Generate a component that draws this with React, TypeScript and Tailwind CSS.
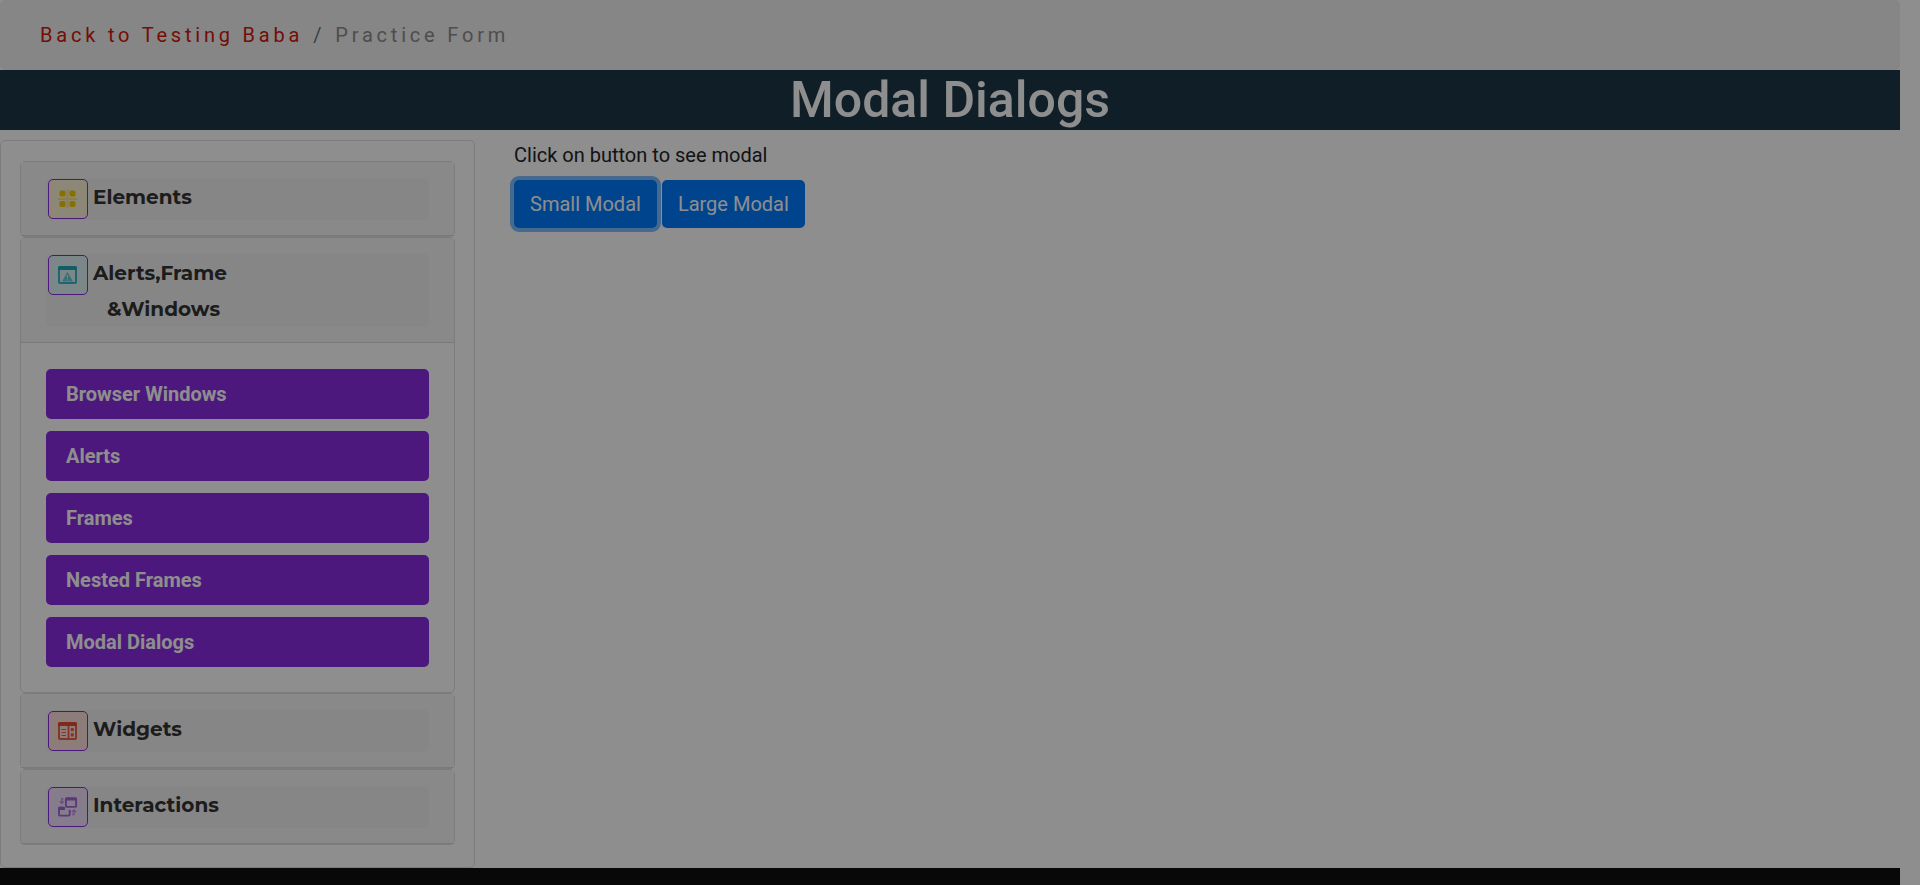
import type { ReactNode } from "react";

function ElementsIcon() {
  return (
    <svg viewBox="0 0 20 20" className="size-5" aria-hidden="true">
      <g fill="#f6d21f" opacity="0.45">
        <rect x="8.5" y="0.5" width="2" height="19" />
        <rect x="0" y="9" width="19" height="2" />
      </g>
      <g fill="#f5c900">
        <rect x="1.500" y="1.500" width="6" height="6" rx="1.800" />
        <rect x="11.500" y="1.500" width="6" height="6" rx="1.800" />
        <rect x="1.500" y="12" width="6" height="6" rx="1.800" />
        <rect x="11.500" y="12" width="6" height="6" rx="1.800" />
      </g>
    </svg>
  );
}

function AlertsIcon() {
  return (
    <svg viewBox="0 0 20 20" className="size-5" aria-hidden="true">
      <rect x="1" y="2" width="17" height="16" rx="1.600" fill="none" stroke="#38b6c8" strokeWidth="2" />
      <path d="M1.500 1h16A1.500 1.500 0 0 1 19 2.500V5H0V2.500A1.500 1.500 0 0 1 1.500 1z" fill="#1fa9bd" />
      <path d="M9.500 6.800L15 16.500H4z" fill="#6cc9d6" />
      <path d="M9.500 10v3M9.500 14.200v1.300" stroke="#d7f0f4" strokeWidth="1.200" />
    </svg>
  );
}

function WidgetsIcon() {
  return (
    <svg viewBox="0 0 20 20" className="size-5" aria-hidden="true">
      <rect x="1" y="2" width="17" height="16" rx="1.600" fill="none" stroke="#ee5f45" strokeWidth="2" />
      <path d="M1.500 1h16A1.500 1.500 0 0 1 19 2.500V5H0V2.500A1.500 1.500 0 0 1 1.500 1z" fill="#e84a30" />
      <path d="M10.500 5v13" stroke="#ee5f45" strokeWidth="1.800" />
      <path d="M3.500 8.500H8M3.500 11.500H8M3.500 14.500H8" stroke="#ee5f45" strokeWidth="1.200" />
      <rect x="12.800" y="7" width="3" height="3.200" rx="0.600" fill="#ee5f45" />
      <rect x="12.800" y="12.300" width="3" height="3.200" rx="0.600" fill="#ee5f45" />
    </svg>
  );
}

function InteractionsIcon() {
  return (
    <svg viewBox="0 0 20 20" className="size-5" aria-hidden="true">
      <g fill="none" stroke="#a565dd" strokeWidth="1.900">
        <rect x="7.900" y="1.200" width="10.200" height="8.700" rx="1" />
        <path d="M5.500 10.500H2a1 1 0 0 0-1 1v6.100a1 1 0 0 0 1 1h8.700a1 1 0 0 0 1-1V12.800" />
      </g>
      <path d="M7.500 0.800H19v2.700H7.500zM0.500 10H7v3H0.500z" fill="#a565dd" />
      <g fill="none" stroke="#bf92e6" strokeWidth="1.400">
        <path d="M5.500 1.800H3.800v4M1.800 4.200l2 2.200 2-2.200" />
        <path d="M14 17.500h2v-3M13.800 15.200l2.200-2.200 2.200 2.200" />
      </g>
    </svg>
  );
}

type SectionProps = {
  icon: ReactNode;
  tint: string;
  title: ReactNode;
  children?: ReactNode;
};

function Section({ icon, tint, title, children }: SectionProps) {
  return (
    <section className="rounded-[5px] border border-[#dfdfdf]">
      <div className="border-b border-[#dadada] bg-[#f7f7f7] px-[25px] pt-4 pb-[15px]">
        <button
          type="button"
          aria-expanded={Boolean(children)}
          className="flex w-full items-start gap-[5px] rounded-[5px] bg-[#f0f0f0] pl-0.5 text-left"
        >
          <span className={`mt-px flex size-10 shrink-0 items-center justify-center rounded-[5px] border border-[#8a2be2] ${tint}`}>
            {icon}
          </span>
          <span className="min-h-[42px] pt-px font-['Montserrat',sans-serif] text-xl leading-9 font-bold text-[#333]">
            {title}
          </span>
        </button>
      </div>
      {children}
    </section>
  );
}

const links = ["Browser Windows", "Alerts", "Frames", "Nested Frames", "Modal Dialogs"];

export default function App() {
  return (
    <div className="min-h-screen bg-white pr-5 font-['Roboto',sans-serif] text-xl leading-[30px] text-[#212529]">
      <nav aria-label="Breadcrumb" className="rounded-[5px] bg-[#f0f0f0] px-10 py-5 tracking-[0.19em]">
        <ol className="flex gap-2.5">
          <li><a href="#home" className="text-[#d0180c]">Back to Testing Baba</a></li>
          <li aria-hidden="true" className="text-[#6c757d]">/</li>
          <li aria-current="page" className="text-[#8c8c8c]">Practice Form</li>
        </ol>
      </nav>
      <h1 className="bg-[#1e3846] text-center text-[50px] leading-[60px] font-medium text-white">Modal Dialogs</h1>
      <div className="flex items-start pt-2.5">
        <aside className="w-1/4 rounded-[5px] border border-[#dfdfdf] px-[19px] pt-5 pb-[22px]">
          <Section icon={<ElementsIcon />} tint="bg-[#fbf3d5]" title="Elements" />
          <Section
            icon={<AlertsIcon />}
            tint="bg-[#dff3f7]"
            title={<>Alerts,Frame<br /><span className="pl-3.5">&amp;Windows</span></>}
          >
            <ul className="flex flex-col gap-3 px-[25px] pt-[26px] pb-[25px]">
              {links.map((label) => (
                <li key={label}>
                  <a href="#practice" className="block rounded-[5px] bg-[#8a2be2] px-5 py-2.5 font-bold text-white">{label}</a>
                </li>
              ))}
            </ul>
          </Section>
          <Section icon={<WidgetsIcon />} tint="bg-[#fbe0dc]" title="Widgets" />
          <Section icon={<InteractionsIcon />} tint="bg-[#efe0fa]" title="Interactions" />
        </aside>
        <main className="flex-1 px-[39px]">
          <p>Click on button to see modal</p>
          <div className="mt-2.5 flex gap-[5px]">
            <button type="button" className="rounded-[5px] bg-[#007bff] px-4 py-[9px] text-white ring-4 ring-[#007bff]/50">Small Modal</button>
            <button type="button" className="rounded-[5px] bg-[#007bff] px-4 py-[9px] text-white">Large Modal</button>
          </div>
        </main>
      </div>
      <footer className="h-[17px] bg-[#0f0f0f]" />
      <div className="fixed inset-0 bg-[#00000071]" />
    </div>
  );
}
